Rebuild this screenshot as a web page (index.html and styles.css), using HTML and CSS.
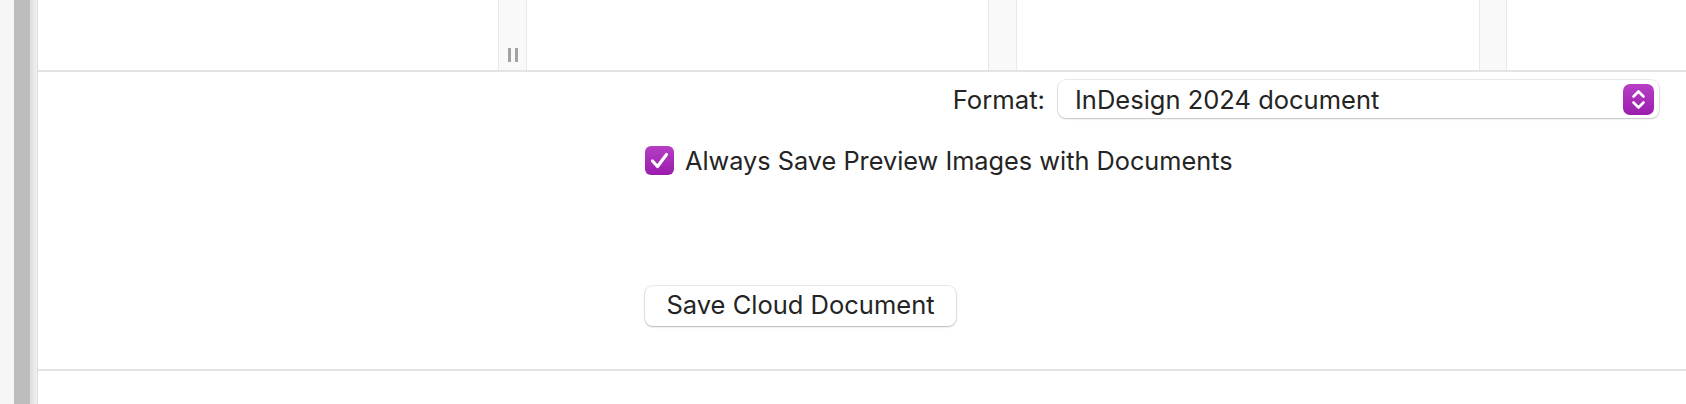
FILE: index.html
```html
<!DOCTYPE html>
<html>
<head>
<meta charset="utf-8">
<link rel="stylesheet" href="styles.css">
</head>
<body>
<div class="app">
  <div class="rail-light"></div>
  <div class="rail-gray"></div>
  <div class="rail-edge"></div>
  <div class="main">
    <div class="browser">
      <div class="col"></div>
      <div class="sep"><span class="handle"><i></i><i></i></span></div>
      <div class="col"></div>
      <div class="sep"></div>
      <div class="col"></div>
      <div class="sep"></div>
      <div class="col"></div>
    </div>
    <div class="dialog">
      <div class="row-format">
        <span class="label">Format:</span>
        <div class="popup">
          <span class="popup-text">InDesign 2024 document</span>
          <span class="stepper">
            <svg width="31" height="31" viewBox="0 0 31 31">
              <path d="M10.5 12.5 L15.5 7.5 L20.5 12.5" fill="none" stroke="#fff" stroke-width="2.6" stroke-linecap="round" stroke-linejoin="round"/>
              <path d="M10.5 18.5 L15.5 23.5 L20.5 18.5" fill="none" stroke="#fff" stroke-width="2.6" stroke-linecap="round" stroke-linejoin="round"/>
            </svg>
          </span>
        </div>
      </div>
      <label class="row-check">
        <span class="checkbox">
          <svg width="29" height="29" viewBox="0 0 29 29">
            <path d="M7.5 15 L12.5 20.5 L21.5 8.5" fill="none" stroke="#fff" stroke-width="3.2" stroke-linecap="round" stroke-linejoin="round"/>
          </svg>
        </span>
        <span class="check-label">Always Save Preview Images with Documents</span>
      </label>
      <div class="row-button">
        <button class="btn">Save Cloud Document</button>
      </div>
    </div>
    <div class="footer"></div>
  </div>
</div>
</body>
</html>
```
FILE: styles.css
```css
html, body {
  margin: 0;
  padding: 0;
  background: #ffffff;
}
body {
  width: 1686px;
  height: 404px;
  overflow: hidden;
  font-family: Inter, "Liberation Sans", sans-serif;
  color: #242424;
}
.app {
  display: flex;
  height: 404px;
}
.rail-light {
  width: 14px;
  background: #f6f6f6;
}
.rail-gray {
  width: 16px;
  background: #bdbdbd;
}
.rail-edge {
  width: 7px;
  background: linear-gradient(to right, #dedede, #f1f1f1);
  border-right: 1px solid #dcdcdc;
}
.main {
  flex: 1;
  display: flex;
  flex-direction: column;
}
.browser {
  height: 70px;
  display: grid;
  grid-template-columns: 460px 29px 461px 29px 462px 28px 1fr;
  border-bottom: 2px solid #e4e4e4;
}
.col {
  background: #ffffff;
}
.sep {
  background: #f9f9f9;
  border-left: 1px solid #e9e9e9;
  border-right: 1px solid #e9e9e9;
  position: relative;
}
.handle {
  position: absolute;
  left: 9px;
  top: 48px;
  display: flex;
  gap: 4px;
}
.handle i {
  display: block;
  width: 3px;
  height: 14px;
  background: #a3a3a3;
}
.dialog {
  height: 297px;
  display: flex;
  flex-direction: column;
  border-bottom: 2px solid #e4e4e4;
}
.row-format {
  display: flex;
  justify-content: flex-end;
  align-items: center;
  padding-top: 8px;
  padding-right: 27px;
  gap: 13px;
}
.label {
  font-size: 25.7px;
  color: #242424;
}
.popup {
  width: 601px;
  height: 38px;
  box-sizing: border-box;
  background: #fff;
  border-radius: 8px;
  box-shadow: 0 0 0 1px rgba(0,0,0,0.08), 0 1px 2px rgba(0,0,0,0.18);
  display: flex;
  align-items: center;
  justify-content: space-between;
  padding-left: 17px;
  padding-right: 5px;
}
.popup-text {
  font-size: 25.5px;
  color: #242424;
}
.stepper {
  width: 31px;
  height: 31px;
  border-radius: 7px;
  background: linear-gradient(to bottom, #b73fc6, #9b1dad);
  display: flex;
}
.row-check {
  display: flex;
  align-items: center;
  gap: 11px;
  padding-left: 607px;
  margin-top: 27px;
}
.checkbox {
  width: 29px;
  height: 29px;
  border-radius: 6px;
  background: linear-gradient(to bottom, #b53ec4, #9a1dac);
  display: flex;
}
.check-label {
  font-size: 25.3px;
  color: #242424;
}
.row-button {
  padding-left: 607px;
  margin-top: 110px;
}
.btn {
  width: 311px;
  height: 40px;
  background: #fff;
  border: none;
  border-radius: 8px;
  box-shadow: 0 0 0 1px rgba(0,0,0,0.08), 0 1px 2px rgba(0,0,0,0.22);
  font-family: Inter, "Liberation Sans", sans-serif;
  font-size: 25.5px;
  line-height: 36px;
  color: #242424;
  padding: 0 0 2px 0;
}
.footer {
  flex: 1;
}
```
